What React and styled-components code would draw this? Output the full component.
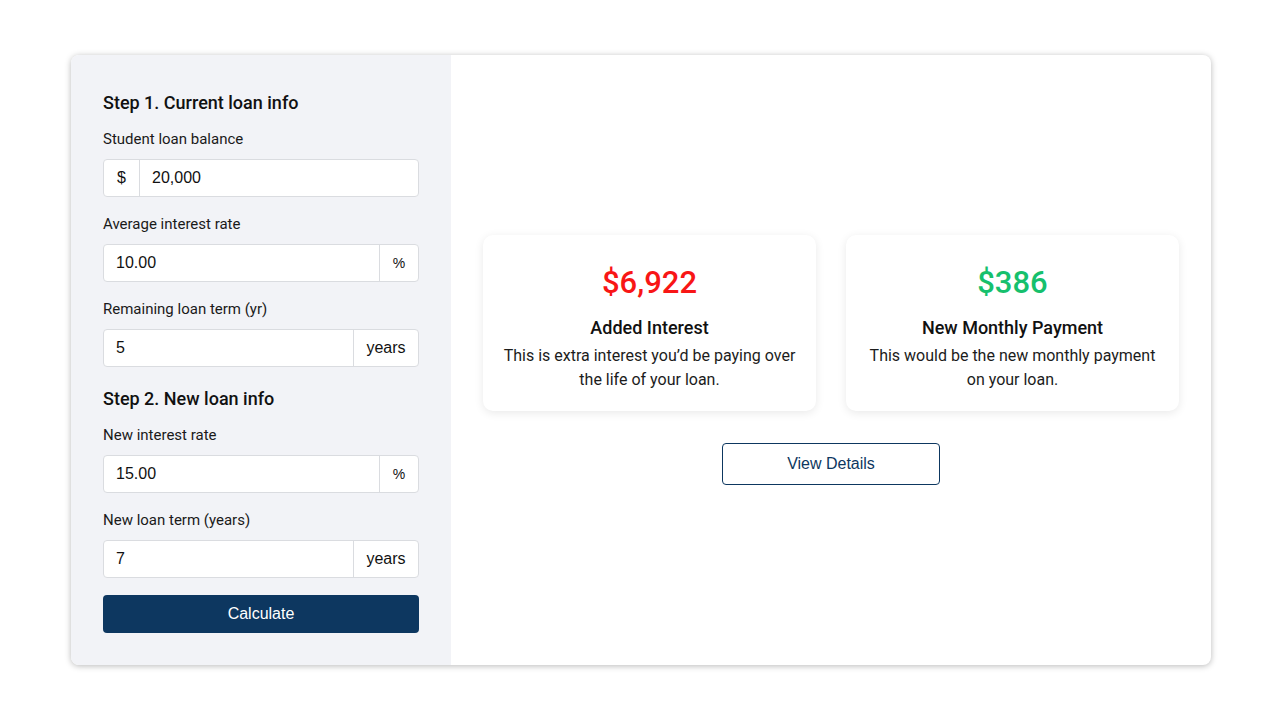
import React from 'react';
import styled, { createGlobalStyle } from 'styled-components';

const GlobalStyle = createGlobalStyle`
  body {
    margin: 0;
    background: #ffffff;
    font-family: Roboto, "Liberation Sans", sans-serif;
    color: #111;
  }
`;

const Page = styled.div`
  width: 1280px;
  height: 720px;
  display: flex;
  padding: 55px 0 0 71px;
  box-sizing: border-box;
`;

const Calculator = styled.div`
  width: 1140px;
  height: 610px;
  display: flex;
  border-radius: 8px;
  overflow: hidden;
  background: #fff;
  box-shadow: 0 1px 6px rgba(0, 0, 0, 0.28);
`;

const FormPanel = styled.div`
  width: 380px;
  background: #f2f3f7;
  padding: 36px 32px 32px;
  box-sizing: border-box;
  display: flex;
  flex-direction: column;
`;

const StepTitle = styled.h3`
  margin: ${(p) => (p.$second ? '3px' : '0')} 0 14px;
  font-size: 18px;
  line-height: 24px;
  font-weight: 500;
  color: #111;
`;

const Field = styled.div`
  margin-bottom: 17px;
`;

const Label = styled.div`
  font-size: 15px;
  line-height: 20px;
  color: #1a1a1a;
  margin-bottom: 10px;
`;

const InputGroup = styled.div`
  display: flex;
  height: 38px;
  box-sizing: border-box;
  background: #fff;
  border: 1px solid #dadce0;
  border-radius: 4px;
  font-family: "Liberation Sans", Arial, sans-serif;
  font-size: 16px;
  color: #111;
`;

const Addon = styled.div`
  width: ${(p) => p.$width}px;
  flex: none;
  display: flex;
  align-items: center;
  justify-content: center;
  ${(p) => (p.$end ? 'border-left' : 'border-right')}: 1px solid #dadce0;
  font-size: ${(p) => (p.$small ? '14px' : '16px')};
`;

const Value = styled.div`
  flex: 1;
  display: flex;
  align-items: center;
  padding-left: 12px;
`;

const CalcButton = styled.button`
  height: 38px;
  width: 100%;
  border: none;
  border-radius: 4px;
  background: #0d3760;
  color: #fff;
  font-family: "Liberation Sans", Arial, sans-serif;
  font-size: 16px;
`;

const ResultPanel = styled.div`
  flex: 1;
  display: flex;
  flex-direction: column;
  justify-content: center;
  align-items: center;
  padding: 0 32px;
`;

const Cards = styled.div`
  width: 100%;
  display: grid;
  grid-template-columns: 1fr 1fr;
  gap: 30px;
`;

const ResultCard = styled.div`
  height: 176px;
  box-sizing: border-box;
  padding: 28px 16px 0;
  border-radius: 10px;
  background: #fff;
  box-shadow: 0 2px 10px rgba(0, 0, 0, 0.09);
  text-align: center;
`;

const Amount = styled.div`
  font-size: 31px;
  line-height: 40px;
  font-weight: 500;
  color: ${(p) => p.$color};
  margin-bottom: 13px;
`;

const CardTitle = styled.div`
  font-size: 18px;
  line-height: 24px;
  font-weight: 500;
  margin-bottom: 4px;
`;

const CardText = styled.div`
  font-size: 16px;
  line-height: 24px;
  color: #1c1c1c;
`;

const DetailsButton = styled.button`
  margin-top: 32px;
  width: 218px;
  height: 42px;
  background: #fff;
  border: 1px solid #0d3760;
  border-radius: 4px;
  color: #0d3760;
  font-family: "Liberation Sans", Arial, sans-serif;
  font-size: 16px;
`;

function InputRow({ prefix, suffix, suffixWidth, value }) {
  return (
    <InputGroup>
      {prefix && <Addon $width={35}>{prefix}</Addon>}
      <Value>{value}</Value>
      {suffix && (
        <Addon $end $width={suffixWidth} $small={suffix === '%'}>
          {suffix}
        </Addon>
      )}
    </InputGroup>
  );
}

export default function App() {
  return (
    <Page>
      <GlobalStyle />
      <Calculator>
        <FormPanel>
          <StepTitle>Step 1. Current loan info</StepTitle>
          <Field>
            <Label>Student loan balance</Label>
            <InputRow prefix="$" value="20,000" />
          </Field>
          <Field>
            <Label>Average interest rate</Label>
            <InputRow value="10.00" suffix="%" suffixWidth={38} />
          </Field>
          <Field>
            <Label>Remaining loan term (yr)</Label>
            <InputRow value="5" suffix="years" suffixWidth={64} />
          </Field>
          <StepTitle $second>Step 2. New loan info</StepTitle>
          <Field>
            <Label>New interest rate</Label>
            <InputRow value="15.00" suffix="%" suffixWidth={38} />
          </Field>
          <Field>
            <Label>New loan term (years)</Label>
            <InputRow value="7" suffix="years" suffixWidth={64} />
          </Field>
          <CalcButton>Calculate</CalcButton>
        </FormPanel>
        <ResultPanel>
          <Cards>
            <ResultCard>
              <Amount $color="#f81616">$6,922</Amount>
              <CardTitle>Added Interest</CardTitle>
              <CardText>
                This is extra interest you’d be paying over the life of your loan.
              </CardText>
            </ResultCard>
            <ResultCard>
              <Amount $color="#16c06d">$386</Amount>
              <CardTitle>New Monthly Payment</CardTitle>
              <CardText>
                This would be the new monthly payment on your loan.
              </CardText>
            </ResultCard>
          </Cards>
          <DetailsButton>View Details</DetailsButton>
        </ResultPanel>
      </Calculator>
    </Page>
  );
}
